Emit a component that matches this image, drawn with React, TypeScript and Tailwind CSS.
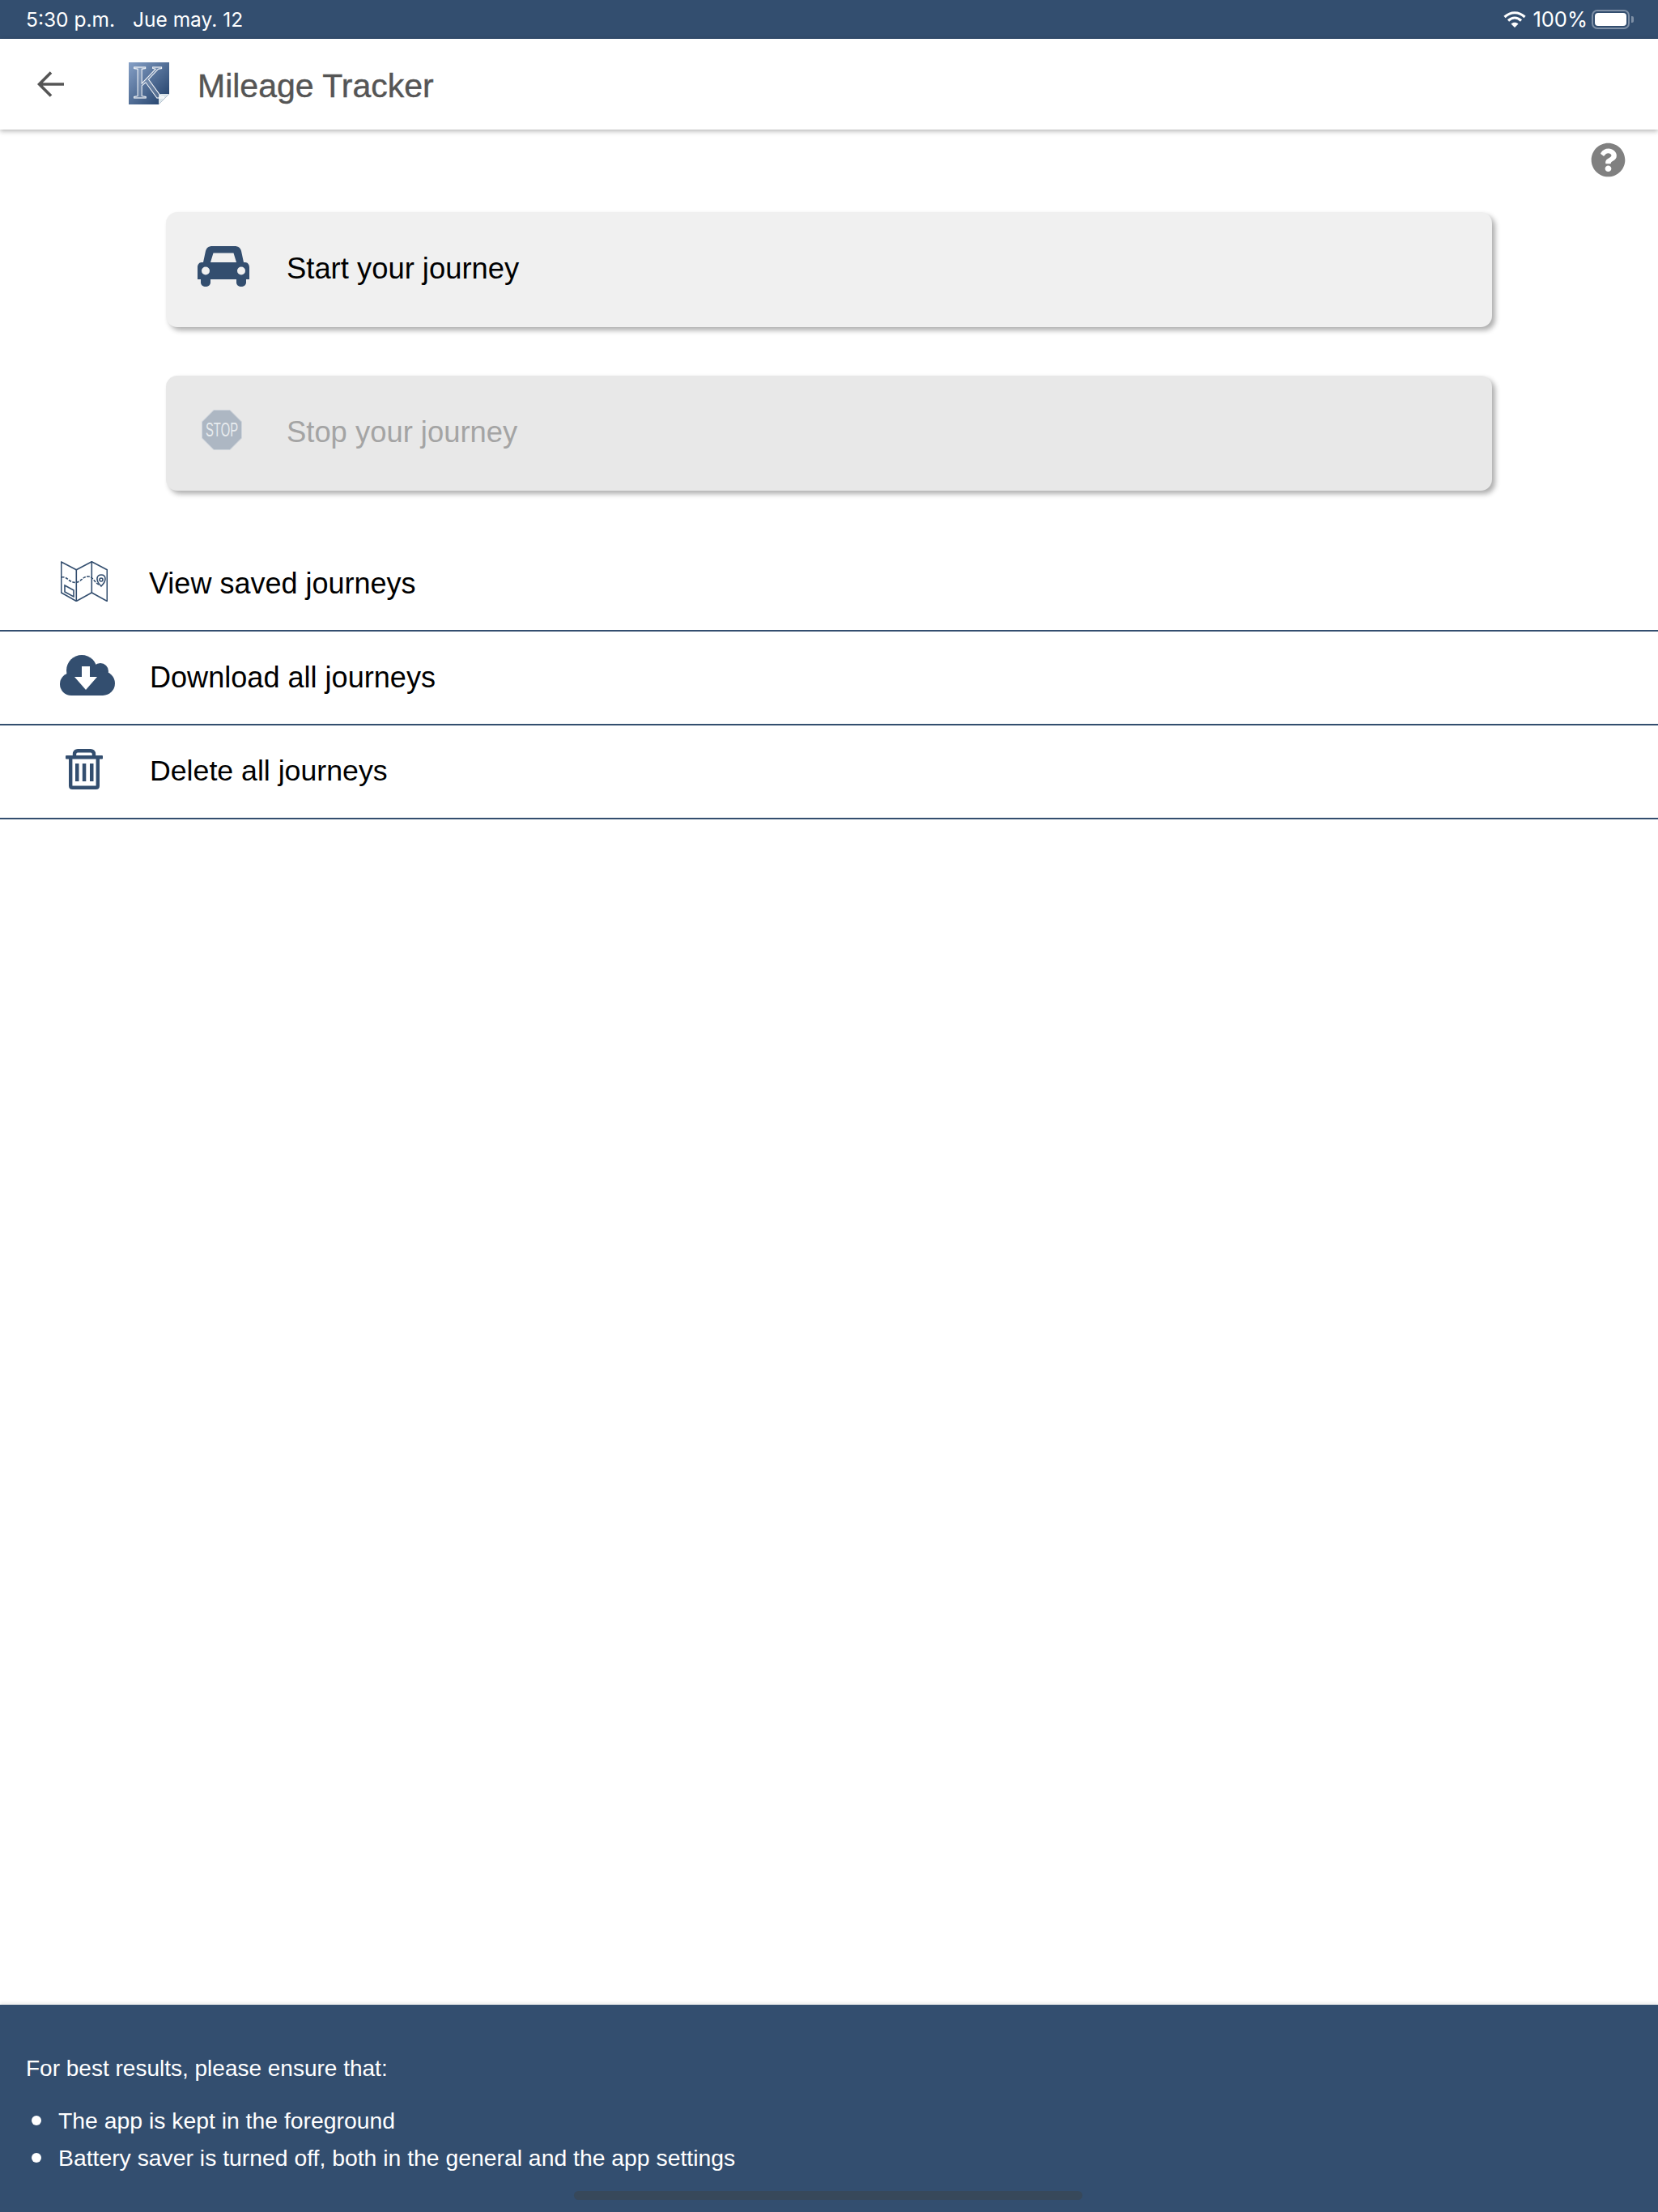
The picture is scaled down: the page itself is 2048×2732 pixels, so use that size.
import React from "react";
import { FaQuestionCircle } from "react-icons/fa";

function Logo() {
  return (
    <svg width="50" height="52" viewBox="0 0 50 52" className="shrink-0 overflow-visible">
      <defs>
        <linearGradient id="lg" x1="0" y1="0" x2="1" y2="1">
          <stop offset="0" stopColor="#86a0c6" />
          <stop offset="1" stopColor="#1d3c66" />
        </linearGradient>
      </defs>
      <path d="M0 0H50V39L37 52H0Z" fill="url(#lg)" />
      <path d="M50 39L37 52V42Q37 39 40 39Z" fill="#dbe5ea" />
      <text x="5" y="44" fontFamily="'Liberation Serif', serif" fontSize="56" textLength="39" lengthAdjust="spacingAndGlyphs" fill="rgba(255,255,255,0.15)" stroke="#ffffff" strokeWidth="0.9">K</text>
    </svg>
  );
}

function Car() {
  return (
    <svg width="64" height="50" viewBox="0 0 64 50" className="shrink-0">
      <path fillRule="evenodd" fill="#334e6f" d="M18 0H46C50 0 53 2 54 6L57 20H59C62 20 64 23 64 26V41H60V45C60 48 57 50 54 50C51 50 48 48 48 45V41H16V45C16 48 13 50 10 50C7 50 4 48 4 45V41H0V26C0 23 2 20 5 20H7L10 6C11 2 14 0 18 0ZM19.5 8.5L16 20H48L44.5 8.5ZM10 25.5A5 5 0 1 0 10 35.5A5 5 0 1 0 10 25.5ZM54 25.5A5 5 0 1 0 54 35.5A5 5 0 1 0 54 25.5Z" />
    </svg>
  );
}

function Stop() {
  return (
    <svg width="50" height="50" viewBox="0 0 50 50" className="shrink-0 overflow-visible">
      <path d="M15 .5H35L49.500 15V35L35 49.500H15L.5 35V15Z" fill="#adb7c3" stroke="#d0d6dd" strokeWidth="1" />
      <text x="25" y="33" textAnchor="middle" fontFamily="'Liberation Sans', sans-serif" fontSize="23" textLength="40" lengthAdjust="spacingAndGlyphs" fill="#e8ecef">STOP</text>
    </svg>
  );
}

function MapIcon() {
  return (
    <svg width="58" height="50" viewBox="0 0 58 50" fill="none" stroke="#334e6f" strokeWidth="1.600" className="shrink-0">
      <path d="M.7 1V39L19.300 49.500L38.300 39L57.300 49.500V10.700L38.300 .7L19.300 10.700Z" strokeLinejoin="round" />
      <path d="M19.300 10.700V49.500M38.300 .7V39" />
      <path d="M1 20C6 19 8 22 11 24C15 27 19 27 23 25C27 22 29 19 34 19C40 19 42 27 47 29" strokeDasharray="3.500 1.500" />
      <path d="M50 31C46 27 44.500 24 45 21C45.500 18 48 17 50 17C53 17 55 19 55 22C55 25 53 28 50 31Z" />
      <circle cx="50" cy="23" r="2" />
      <path d="M5 30L16 36V44L5 38Z" />
    </svg>
  );
}

function Cloud() {
  return (
    <svg width="68" height="50" viewBox="0 0 68 50" className="shrink-0">
      <g fill="#334e6f">
        <circle cx="27" cy="19" r="19" />
        <circle cx="50" cy="20" r="10" />
        <circle cx="14" cy="36" r="14" />
        <circle cx="53" cy="35" r="15" />
        <rect x="14" y="25" width="39" height="25" />
      </g>
      <path d="M27 14H37V27H46L32 43L18 27H27Z" fill="#ffffff" />
    </svg>
  );
}

function Trash() {
  return (
    <svg width="46" height="50" viewBox="0 0 46 50" className="shrink-0">
      <g fill="none" stroke="#334e6f" strokeWidth="4.400">
        <path d="M11 9V6.500C11 3.500 13 2.200 15 2.200H31C33 2.200 35 3.500 35 6.500V9" />
        <path d="M6.200 11V45.500C6.200 47 7 47.800 8.500 47.800H37.500C39 47.800 39.800 47 39.800 45.500V11" strokeLinejoin="round" />
      </g>
      <rect x="0" y="8" width="46" height="4.500" rx="1" fill="#334e6f" />
      <rect x="12" y="18" width="4.500" height="22" fill="#334e6f" />
      <rect x="20.800" y="18" width="4.500" height="22" fill="#334e6f" />
      <rect x="30" y="18" width="4.500" height="22" fill="#334e6f" />
    </svg>
  );
}

function Row({ icon, label, iconPad, textX, size }: { icon: React.ReactNode; label: string; iconPad: string; textX: string; size: string }) {
  return (
    <div className="relative flex h-[116px] items-center border-b-2 border-[#334e6f]">
      <div className={`mb-[7px] flex w-[184px] shrink-0 ${iconPad}`}>{icon}</div>
      <span className={`leading-none text-black ${size} ${textX}`}>{label}</span>
    </div>
  );
}

export default function App() {
  return (
    <div className="flex h-[2732px] w-[2048px] flex-col overflow-hidden bg-white font-['Liberation_Sans',Arial,sans-serif]">
      <div className="flex h-[48px] shrink-0 items-center justify-between bg-[#334e6f] pl-[32px] pr-[30px] font-['Inter',sans-serif] text-[24.500px] leading-none text-white">
        <div className="flex gap-[22px] pt-[1px]">
          <span>5:30 p.m.</span>
          <span>Jue may. 12</span>
        </div>
        <div className="flex items-center">
          <svg width="28" height="22" viewBox="0 0 28 22" className="mr-[8px]">
            <path fill="none" stroke="#fff" strokeWidth="3.200" d="M1.500 8C9 1 19 1 26.500 8M6 12.500C11 8 17 8 22 12.500" />
            <path fill="#fff" d="M9.500 16.500C12 14.300 16 14.300 18.500 16.500L14 21Z" />
          </svg>
          <span className="mr-[5px] text-[25.500px]">100%</span>
          <div className="flex items-center">
            <div className="h-[24px] w-[47px] rounded-[7px] border-2 border-[#7f90a6] p-[2px]">
              <div className="h-full w-full rounded-[4px] bg-white" />
            </div>
            <div className="ml-[2px] h-[8px] w-[3px] rounded-r-[2px] bg-[#7f90a6]" />
          </div>
        </div>
      </div>

      <div className="relative flex h-[112px] shrink-0 items-center bg-white shadow-[0_2px_6px_rgba(0,0,0,0.3)]">
        <svg width="34" height="32" viewBox="0 0 34 32" className="ml-[46px] shrink-0" fill="none" stroke="#555555" strokeWidth="3.600">
          <path d="M33 16H3M17 1.500L2.500 16L17 30.500" />
        </svg>
        <div className="ml-[79px] -mt-[3px]"><Logo /></div>
        <span className="ml-[35px] mt-[5px] text-[41px] leading-none text-[#555555] [-webkit-text-stroke:0.4px_#555555]">Mileage Tracker</span>
      </div>

      <div className="flex flex-1 flex-col">
        <div className="flex justify-end pr-[40px] pt-[16px]">
          <FaQuestionCircle size={43} color="#808080" />
        </div>

        <div className="mt-[43px] flex flex-col gap-[60px] pl-[205px] pr-[205px]">
          <div className="flex h-[142px] items-center rounded-[14px] bg-[#f0f0f0] pb-[2px] pl-[39px] shadow-[4px_4px_6px_rgba(0,0,0,0.32)]">
            <div className="mb-[6px] w-[110px]"><Car /></div>
            <span className="text-[36.4px] leading-none text-black">Start your journey</span>
          </div>
          <div className="flex h-[142px] items-center rounded-[14px] bg-[#e8e8e8] pb-[2px] pl-[44px] shadow-[4px_4px_6px_rgba(0,0,0,0.32)]">
            <div className="mb-[6px] w-[105px]"><Stop /></div>
            <span className="text-[36.4px] leading-none text-[#a4a4a4]">Stop your journey</span>
          </div>
        </div>

        <div className="mt-[58px] flex flex-col">
          <Row icon={<MapIcon />} label="View saved journeys" iconPad="pl-[75px]" textX="" size="text-[36px]" />
          <Row icon={<Cloud />} label="Download all journeys" iconPad="pl-[74px]" textX="ml-[1px]" size="text-[36.100px]" />
          <Row icon={<Trash />} label="Delete all journeys" iconPad="pl-[81px]" textX="ml-[1px]" size="text-[35.700px]" />
        </div>
      </div>

      <div className="relative h-[256px] shrink-0 bg-[#334e6f] pl-[32px] pt-[64px] text-[28px] leading-none text-white shadow-[0_-3px_3px_rgba(0,0,0,0.06)]">
        <p className="mb-[34px] leading-[30px]">For best results, please ensure that:</p>
        <ul className="flex flex-col gap-[16px] text-[28.35px]">
          <li className="flex items-center leading-[30px]">
            <span className="ml-[7px] mr-[21px] h-[12px] w-[12px] rounded-full bg-white" />
            The app is kept in the foreground
          </li>
          <li className="flex items-center leading-[30px]">
            <span className="ml-[7px] mr-[21px] h-[12px] w-[12px] rounded-full bg-white" />
            Battery saver is turned off, both in the general and the app settings
          </li>
        </ul>
        <div className="absolute left-[709px] top-[230px] h-[11px] w-[628px] rounded-full bg-[#37485a]" />
      </div>
    </div>
  );
}
